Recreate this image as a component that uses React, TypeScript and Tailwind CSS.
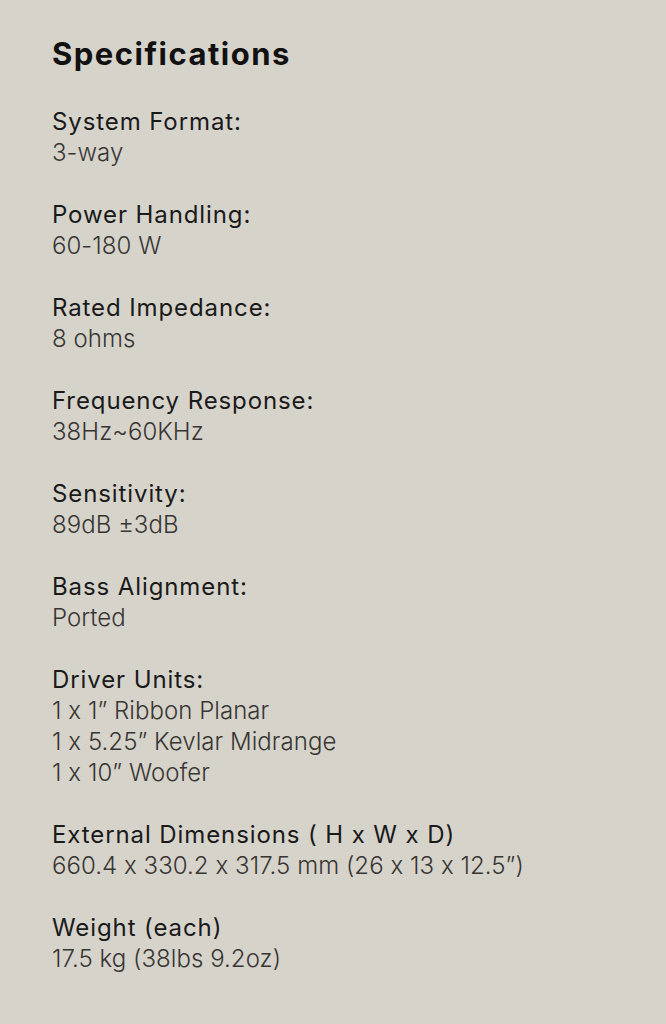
const SPECS = [
  { label: "System Format:", values: ["3-way"] },
  { label: "Power Handling:", values: ["60-180 W"] },
  { label: "Rated Impedance:", values: ["8 ohms"] },
  { label: "Frequency Response:", values: ["38Hz~60KHz"] },
  { label: "Sensitivity:", values: ["89dB ±3dB"] },
  { label: "Bass Alignment:", values: ["Ported"] },
  {
    label: "Driver Units:",
    values: ["1 x 1\u201d Ribbon Planar", "1 x 5.25\u201d Kevlar Midrange", "1 x 10\u201d Woofer"],
  },
  { label: "External Dimensions ( H x W x D)", values: ["660.4 x 330.2 x 317.5 mm (26 x 13 x 12.5\u201d)"] },
  { label: "Weight (each)", values: ["17.5 kg (38lbs 9.2oz)"] },
];

export default function App() {
  return (
    <div className="w-[666px] h-[1024px] bg-[#d6d3cb] px-[52px] pt-[34px] font-['Inter',sans-serif] [font-feature-settings:'calt'_0] overflow-hidden">
      <h1 className="text-[31px] leading-[40px] font-bold text-[#111] tracking-[1.5px]">Specifications</h1>
      <div className="mt-[32px] flex flex-col gap-[31px]">
        {SPECS.map((s) => (
          <div key={s.label}>
            <div className="text-[24px] leading-[31px] text-[#1a1a1a] tracking-[0.9px]">{s.label}</div>
            {s.values.map((v) => (
              <div key={v} className="text-[24px] leading-[31px] font-light text-[#383633] tracking-[0.05px]">
                {v}
              </div>
            ))}
          </div>
        ))}
      </div>
    </div>
  );
}
